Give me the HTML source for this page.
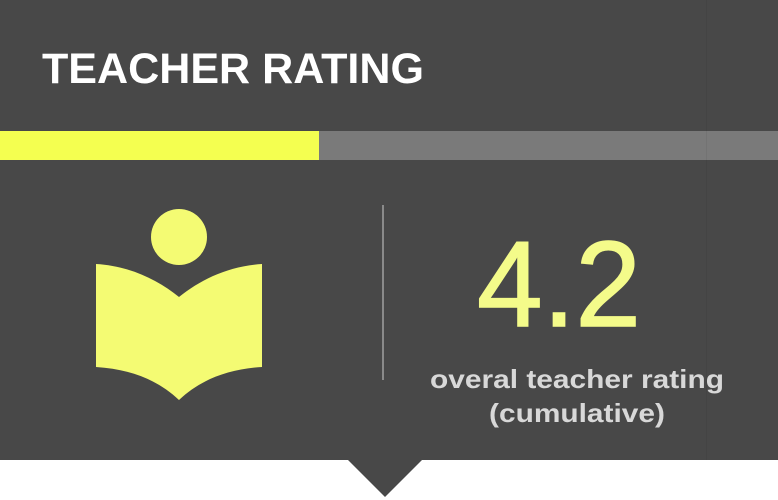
<!DOCTYPE html>
<html><head><meta charset="utf-8"><style>
html,body{margin:0;padding:0;width:778px;height:500px;overflow:hidden;background:#fff}
</style></head><body>
<svg width="778" height="500" viewBox="0 0 778 500" xmlns="http://www.w3.org/2000/svg" style="display:block">
<rect x="0" y="0" width="778" height="460" fill="#484848"/>
<polygon points="348,460 422,460 385,497" fill="#484848"/>
<rect x="0" y="131" width="319" height="29" fill="#f4ff50"/>
<rect x="319" y="131" width="459" height="29" fill="#7a7a7a"/>
<rect x="706" y="0" width="1" height="460" fill="#000" fill-opacity="0.05"/>
<text x="42" y="83" font-family="Liberation Sans, sans-serif" font-weight="bold" font-size="43" fill="#fff" textLength="382" lengthAdjust="spacingAndGlyphs">TEACHER RATING</text>
<ellipse cx="179" cy="237" rx="28" ry="28" fill="#f4fb73"/>
<path d="M96 264 C130 266 158 280 179 297 C200 280 228 266 262 264 L262 367 C228 369 200 380 179 400 C158 380 130 369 96 367 Z" fill="#f4fb73"/>
<rect x="382" y="205" width="2" height="175" fill="#8a8a8a"/>
<text x="559" y="326" text-anchor="middle" font-family="Liberation Sans, sans-serif" font-size="122" fill="#f4fb8a" stroke="#f4fb8a" stroke-width="1.5" textLength="164" lengthAdjust="spacingAndGlyphs">4.2</text>
<text x="577" y="388" text-anchor="middle" font-family="Liberation Sans, sans-serif" font-weight="bold" font-size="26" fill="#d8d8d8" textLength="294" lengthAdjust="spacingAndGlyphs">overal teacher rating</text>
<text x="577" y="422" text-anchor="middle" font-family="Liberation Sans, sans-serif" font-weight="bold" font-size="26" fill="#d8d8d8" textLength="176" lengthAdjust="spacingAndGlyphs">(cumulative)</text>
</svg>
</body></html>
